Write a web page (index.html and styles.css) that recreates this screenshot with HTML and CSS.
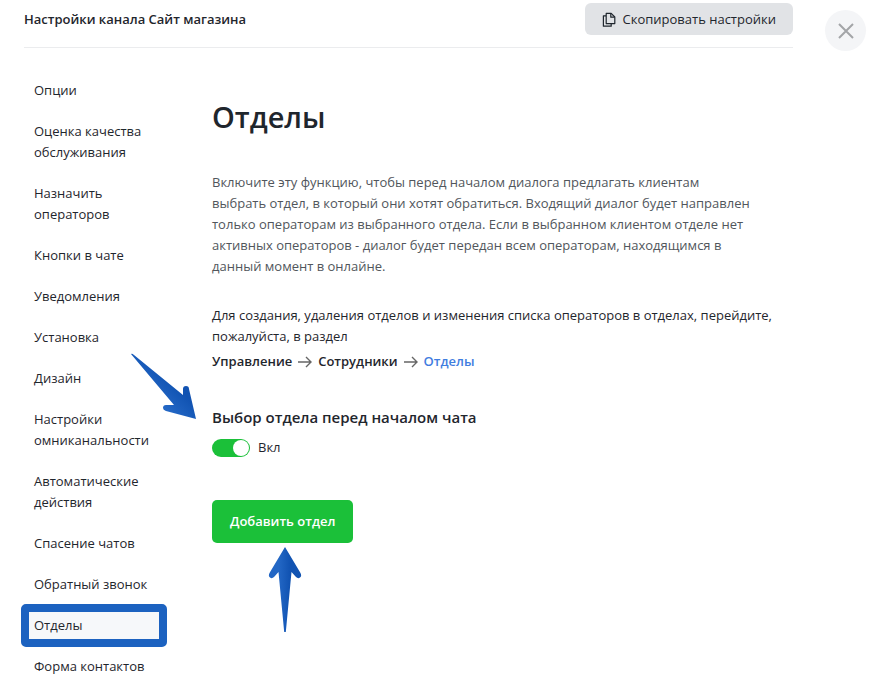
FILE: index.html
```html
<!DOCTYPE html>
<html lang="ru">
<head>
<meta charset="utf-8">
<title>Настройки канала</title>
<link rel="stylesheet" href="styles.css">
</head>
<body>
<div class="page">
  <div class="panel">
    <header class="header">
      <h2 class="header-title">Настройки канала Сайт магазина</h2>
      <button class="copy" type="button">
        <svg width="14" height="16" viewBox="0 0 14 16" fill="none" stroke="currentColor" stroke-width="1.2" stroke-linejoin="round"><path d="M4.2 1.4h5l3.6 3.6v6.6H4.2z"/><path d="M8.8 1.6V5.2h3.8"/><path d="M4 3.8H1.4v10.4h7.8v-2.4"/></svg>
        <span>Скопировать настройки</span>
      </button>
    </header>
    <div class="body">
      <nav class="nav">
        <a href="#">Опции</a>
        <a href="#">Оценка качества обслуживания</a>
        <a href="#">Назначить операторов</a>
        <a href="#">Кнопки в чате</a>
        <a href="#">Уведомления</a>
        <a href="#">Установка</a>
        <a href="#">Дизайн</a>
        <a href="#">Настройки омниканальности</a>
        <a href="#">Автоматические действия</a>
        <a href="#">Спасение чатов</a>
        <a href="#">Обратный звонок</a>
        <a href="#" class="active">Отделы</a>
        <a href="#">Форма контактов</a>
      </nav>
      <main class="content">
        <h1>Отделы</h1>
        <p class="intro">Включите эту функцию, чтобы перед началом диалога предлагать клиентам<br>выбрать отдел, в который они хотят обратиться. Входящий диалог будет направлен<br>только операторам из выбранного отдела. Если в выбранном клиентом отделе нет<br>активных операторов - диалог будет передан всем операторам, находящимся в<br>данный момент в онлайне.</p>
        <p class="hint">Для создания, удаления отделов и изменения списка операторов в отделах, перейдите,<br>пожалуйста, в раздел</p>
        <div class="path">
          <span>Управление</span>
          <svg width="14" height="12" viewBox="0 0 14 12" fill="none" stroke="#666" stroke-width="1.4"><path d="M0 6h13M8 1l5 5-5 5"/></svg>
          <span>Сотрудники</span>
          <svg width="14" height="12" viewBox="0 0 14 12" fill="none" stroke="#666" stroke-width="1.4"><path d="M0 6h13M8 1l5 5-5 5"/></svg>
          <a href="#">Отделы</a>
        </div>
        <section class="choice">
          <h3>Выбор отдела перед началом чата</h3>
          <label class="switch"><input type="checkbox" role="switch" checked><span>Вкл</span></label>
          <svg class="pointer pointer-choice" width="68" height="68" viewBox="0 0 68 68"><defs><linearGradient id="g1" x1="0" y1="1" x2="1" y2="0"><stop offset=".35" stop-color="#2367c5"/><stop offset=".6" stop-color="#1153b2"/></linearGradient></defs><path fill="url(#g1)" d="M2 2Q3 1 5 3L54 43V37Q54 34 57 34Q60 34 60 37L67 67L37 59Q34 58 34 56Q34 53 37 53L45 53Z"/></svg>
        </section>
        <div class="add-wrap">
          <button class="add" type="button">Добавить отдел</button>
          <svg class="pointer pointer-add" width="34" height="88" viewBox="0 0 34 88"><defs><linearGradient id="g2"><stop offset=".3" stop-color="#2367c5"/><stop offset=".65" stop-color="#1153b2"/></linearGradient></defs><path fill="url(#g2)" d="M17 1L32.500 27Q34 30 32 31.500Q30 33 28 31L23.500 26L17.800 86H16.200L10.500 26L6 31Q4 33 2 31.500Q0 30 1.500 27Z"/></svg>
        </div>
      </main>
    </div>
  </div>
  <button class="close" type="button" aria-label="Закрыть"><svg width="16" height="16" viewBox="0 0 16 16" fill="none" stroke="#a3a5a8" stroke-width="2"><path d="M1 1l14 14M15 1L1 15"/></svg></button>
</div>
</body>
</html>
```
FILE: styles.css
```css
* { box-sizing: border-box; }
body {
  margin: 0;
  background: #fff;
  color: #1f262d;
  font: 13px/21px "Open Sans", "Noto Sans", sans-serif;
}
h1, h2, h3, p { margin: 0; }
a { color: inherit; text-decoration: none; }
button { border: 0; font: inherit; color: inherit; cursor: pointer; }
.page { display: flex; align-items: flex-start; gap: 32px; padding: 0 20px 0 24px; }
.panel { flex: 1; min-width: 0; }
.header {
  display: flex;
  align-items: flex-start;
  justify-content: space-between;
  height: 48px;
  padding-top: 3px;
  border-bottom: 1px solid #ebecee;
}
.header-title { padding-top: 6px; font-size: 13px; font-weight: 600; }
.copy {
  display: flex;
  align-items: center;
  gap: 7px;
  height: 32px;
  padding: 1px 17px 0;
  border-radius: 6px;
  background: #e1e3e6;
}
.body { display: flex; gap: 40px; padding-top: 22px; }
.nav { flex: none; width: 148px; }
.nav a { display: block; padding: 10px; }
.nav .active {
  margin: 0 6px 0 -2px;
  padding-left: 12px;
  border-radius: 4px;
  background: #f6f8fa;
  outline: 8px solid #1c62c0;
  outline-offset: -7px;
}
.content { flex: 1; min-width: 0; white-space: nowrap; }
h1 { padding-top: 25px; font-size: 29px; line-height: 44px; font-weight: 600; }
.intro { margin-top: 33px; color: #51565c; }
.hint { margin-top: 28px; }
.path { display: flex; align-items: center; gap: 6px; margin-top: 4px; font-weight: 600; }
.path a { color: #3f7de0; }
.choice { position: relative; margin-top: 33px; }
h3 { font-size: 15px; line-height: 24px; font-weight: 600; }
.switch { display: flex; width: max-content; align-items: center; gap: 8px; margin-top: 8px; }
.switch input {
  appearance: none;
  display: flex;
  width: 38px;
  height: 18px;
  margin: 0;
  padding: 1px;
  border-radius: 9px;
  background: #1bc039;
  justify-content: flex-end;
}
.switch input::before { content: ""; width: 16px; height: 16px; border-radius: 50%; background: #fff; }
.add-wrap { position: relative; width: max-content; margin-top: 42px; }
.add {
  height: 43px;
  padding: 0 18px;
  border-radius: 5px;
  background: #1bc039;
  color: #fff;
  font-weight: 600;
}
.pointer { position: absolute; pointer-events: none; }
.pointer-choice { right: calc(100% + 15px); top: -53px; }
.pointer-add { left: calc(50% - 15px); top: 46px; }
.close {
  display: flex;
  flex: none;
  align-items: center;
  justify-content: center;
  width: 41px;
  height: 41px;
  margin-top: 10px;
  padding: 0;
  border-radius: 50%;
  background: #f4f5f7;
}
```
